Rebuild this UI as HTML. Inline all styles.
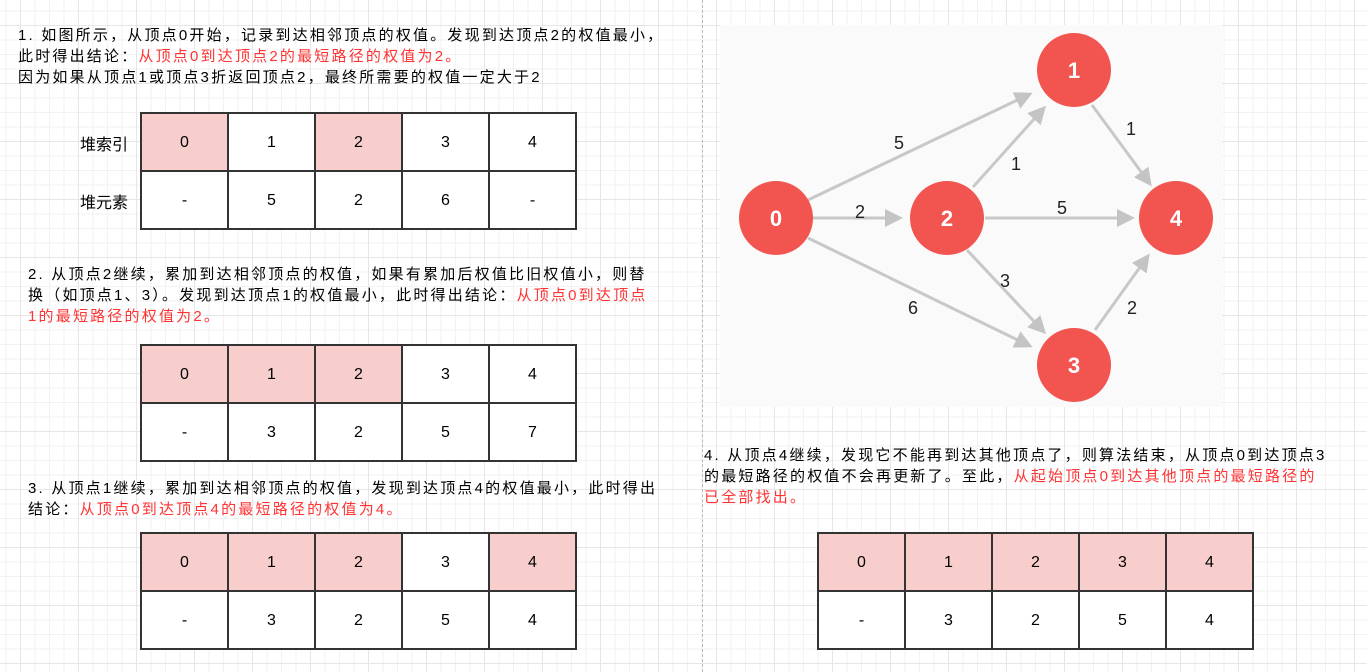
<!DOCTYPE html>
<html><head><meta charset="utf-8"><style>
body{margin:0;width:1367px;height:672px;overflow:hidden;position:relative;font-family:"Liberation Sans","Noto Sans CJK SC",sans-serif;font-size:15px;color:#000;
background-color:#fff;
background-image:linear-gradient(#e6e6e6 1px,transparent 1px),linear-gradient(90deg,#e6e6e6 1px,transparent 1px),linear-gradient(#f2f2f2 1px,transparent 1px),linear-gradient(90deg,#f2f2f2 1px,transparent 1px);
background-size:58px 58px,58px 58px,14.5px 14.5px,14.5px 14.5px;background-position:-1px 25px,20px -1px,-1px 25px,20px -1px;}
.t{position:absolute;line-height:21px;white-space:nowrap;letter-spacing:2.2px}
.r{color:#ff3333}
table{position:absolute;border-collapse:collapse;background:#fff}
td{border:2px solid #333;width:85px;height:54px;text-align:center;font-size:16px;padding:2px 0 0 0;box-sizing:content-box}
.p{background:#f8cecc}
.lab{position:absolute;font-size:16px}
.dash{position:absolute;left:702px;top:0;height:672px;border-left:1px dashed #bbb}
</style></head><body>
<div class="dash"></div>
<div class="t" style="left:18px;top:25px">1. 如图所示，从顶点0开始，记录到达相邻顶点的权值。发现到达顶点2的权值最小，<br>此时得出结论：<span class="r">从顶点0到达顶点2的最短路径的权值为2。</span><br>因为如果从顶点1或顶点3折返回顶点2，最终所需要的权值一定大于2</div>
<div class="lab" style="left:80px;top:131px">堆索引</div>
<div class="lab" style="left:80px;top:189px">堆元素</div>
<table style="left:140px;top:112px"><tr><td class="p">0</td><td>1</td><td class="p">2</td><td>3</td><td>4</td></tr><tr><td>-</td><td>5</td><td>2</td><td>6</td><td>-</td></tr></table>
<div class="t" style="left:28px;top:264px">2. 从顶点2继续，累加到达相邻顶点的权值，如果有累加后权值比旧权值小，则替<br>换（如顶点1、3）。发现到达顶点1的权值最小，此时得出结论：<span class="r">从顶点0到达顶点</span><br><span class="r">1的最短路径的权值为2。</span></div>
<table style="left:140px;top:344px"><tr><td class="p">0</td><td class="p">1</td><td class="p">2</td><td>3</td><td>4</td></tr><tr><td>-</td><td>3</td><td>2</td><td>5</td><td>7</td></tr></table>
<div class="t" style="left:28px;top:478px">3. 从顶点1继续，累加到达相邻顶点的权值，发现到达顶点4的权值最小，此时得出<br>结论：<span class="r">从顶点0到达顶点4的最短路径的权值为4。</span></div>
<table style="left:140px;top:532px"><tr><td class="p">0</td><td class="p">1</td><td class="p">2</td><td>3</td><td class="p">4</td></tr><tr><td>-</td><td>3</td><td>2</td><td>5</td><td>4</td></tr></table>
<div class="t" style="left:704px;top:445px">4. 从顶点4继续，发现它不能再到达其他顶点了，则算法结束，从顶点0到达顶点3<br>的最短路径的权值不会再更新了。至此，<span class="r">从起始顶点0到达其他顶点的最短路径的</span><br><span class="r">已全部找出。</span></div>
<table style="left:817px;top:532px"><tr><td class="p">0</td><td class="p">1</td><td class="p">2</td><td class="p">3</td><td class="p">4</td></tr><tr><td>-</td><td>3</td><td>2</td><td>5</td><td>4</td></tr></table>
<svg style="position:absolute;left:0;top:0" width="1367" height="672">
<defs><marker id="a" markerWidth="6" markerHeight="6" refX="5" refY="3" orient="auto" markerUnits="strokeWidth"><path d="M0,0 L6,3 L0,6 Z" fill="#c4c4c4"/></marker></defs>
<rect x="720" y="25" width="502" height="382" fill="#fafafa"/>
<g stroke="#c8c8c8" stroke-width="3" marker-end="url(#a)">
<line x1="808" y1="200" x2="1030" y2="94"/>
<line x1="813" y1="218" x2="900" y2="218"/>
<line x1="973" y1="187" x2="1044" y2="108"/>
<line x1="985" y1="218" x2="1132" y2="218"/>
<line x1="808" y1="238" x2="1030" y2="346"/>
<line x1="967" y1="250" x2="1044" y2="332"/>
<line x1="1092" y1="105" x2="1150" y2="184"/>
<line x1="1095" y1="330" x2="1148" y2="256"/>
</g>
<g font-family="Liberation Sans" font-size="18" fill="#222" text-anchor="middle">
<text x="899" y="149">5</text><text x="860" y="218">2</text><text x="1016" y="170">1</text>
<text x="1062" y="214">5</text><text x="1131" y="135">1</text><text x="1005" y="287">3</text>
<text x="913" y="314">6</text><text x="1132" y="314">2</text></g>
<g fill="#f25450"><circle cx="776" cy="218" r="37"/><circle cx="947" cy="218" r="37"/><circle cx="1074" cy="70" r="37"/><circle cx="1176" cy="218" r="37"/><circle cx="1074" cy="365" r="37"/></g>
<g font-family="Liberation Sans" font-size="22" font-weight="bold" fill="#fff" text-anchor="middle">
<text x="776" y="226">0</text><text x="947" y="226">2</text><text x="1074" y="78">1</text><text x="1176" y="226">4</text><text x="1074" y="373">3</text></g>
</svg>
</body></html>
